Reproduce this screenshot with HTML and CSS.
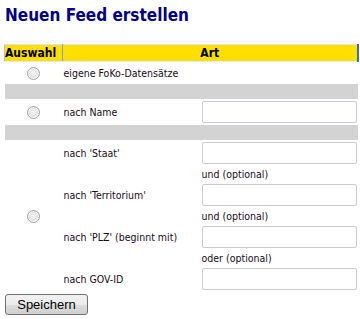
FILE: index.html
```html
<!DOCTYPE html>
<html lang="de">
<head>
  <meta charset="UTF-8">
  <title>Neuen Feed erstellen</title>
  <link rel="stylesheet" href="styles.css">
</head>
<body>
  <h1>Neuen Feed erstellen</h1>
  <form class="feed-form">
    <table class="feed-table">
      <colgroup>
        <col class="c-pick">
        <col class="c-label">
        <col class="c-field">
      </colgroup>
      <thead>
        <tr>
          <th class="col-pick">Auswahl</th>
          <th colspan="2">Art</th>
        </tr>
      </thead>
      <tbody>
        <tr class="row-plain">
          <td class="pick"><input type="radio" name="art" value="foko"></td>
          <td colspan="2">eigene FoKo-Datensätze</td>
        </tr>
        <tr class="sep"><td colspan="3"></td></tr>
        <tr class="row-input">
          <td class="pick"><input type="radio" name="art" value="name"></td>
          <td class="label">nach Name</td>
          <td><input type="text" class="field"></td>
        </tr>
        <tr class="sep"><td colspan="3"></td></tr>
        <tr class="row-input">
          <td class="pick" rowspan="7"><input type="radio" name="art" value="ort"></td>
          <td class="label">nach 'Staat'</td>
          <td><input type="text" class="field"></td>
        </tr>
        <tr class="row-note"><td></td><td>und (optional)</td></tr>
        <tr class="row-input">
          <td class="label">nach 'Territorium'</td>
          <td><input type="text" class="field"></td>
        </tr>
        <tr class="row-note"><td></td><td>und (optional)</td></tr>
        <tr class="row-input">
          <td class="label">nach 'PLZ' (beginnt mit)</td>
          <td><input type="text" class="field"></td>
        </tr>
        <tr class="row-note"><td></td><td>oder (optional)</td></tr>
        <tr class="row-input">
          <td class="label">nach GOV-ID</td>
          <td><input type="text" class="field"></td>
        </tr>
      </tbody>
    </table>
    <button type="button" class="save-btn">Speichern</button>
  </form>
</body>
</html>
```

FILE: styles.css
```css
body {
  margin: 0;
  padding: 0 4px;
  background: #fff;
  font-family: 'DejaVu Sans Condensed', 'DejaVu Sans', Verdana, sans-serif;
  font-size: 10.5px;
  color: #1a0a1a;
}
h1 {
  margin: 0;
  padding: 4px 1px 0 1px;
  height: 44px;
  box-sizing: border-box;
  font-size: 17px;
  line-height: 22px;
  color: #000080;
  font-weight: bold;
}
.feed-table {
  width: 353px;
  border-collapse: collapse;
  table-layout: fixed;
}
.c-pick { width: 58px; }
.c-label { width: 138px; }
.c-field { width: 157px; }
.feed-table th {
  background: #ffdf00;
  color: #000;
  font-size: 12px;
  font-weight: bold;
  height: 16px;
  padding: 0 1px;
  line-height: 16px;
  border-top: 1px solid #dde3ea;
  border-bottom: 1px solid #e6e9ee;
  border-left: 1px solid #a8c0dc;
  border-right: 2px solid #3d6eb6;
  text-align: center;
}
.feed-table th.col-pick {
  text-align: left;
  padding: 0;
  border-right: 1px solid #7ea3d0;
}
.feed-table td {
  padding: 0 1px;
  vertical-align: middle;
}
.feed-table td.label {
  white-space: nowrap;
}
.pick {
  text-align: center;
}
.pick input {
  appearance: none;
  margin: 0;
  width: 13px;
  height: 13px;
  border-radius: 50%;
  border: 1px solid #a4a4a4;
  background: radial-gradient(circle at 50% 45%, #f4f4f4 0%, #e2e2e2 55%, #cfcfcf 100%);
  box-shadow: inset 0 0 0 1px #f8f8f8;
  vertical-align: middle;
}
.row-plain td {
  height: 22px;
}
.row-input td {
  height: 26px;
}
.row-note td {
  height: 16px;
  line-height: 13px;
}
.sep td {
  height: 15px;
  background: #d3d3d3;
}
.field {
  display: block;
  box-sizing: border-box;
  width: 155px;
  height: 22px;
  margin: 0;
  border: 1px solid #c8ccd2;
  border-radius: 2px;
  background: #fff;
}
.save-btn {
  display: block;
  margin: 2px 0 0 1px;
  width: 83px;
  height: 21px;
  padding: 0;
  font-family: 'Liberation Sans', Arial, sans-serif;
  font-size: 13px;
  color: #000;
  border: 1px solid #707070;
  border-radius: 3px;
  background: linear-gradient(#f2f2f2 0%, #ebebeb 50%, #dddddd 51%, #cfcfcf 100%);
}
```
